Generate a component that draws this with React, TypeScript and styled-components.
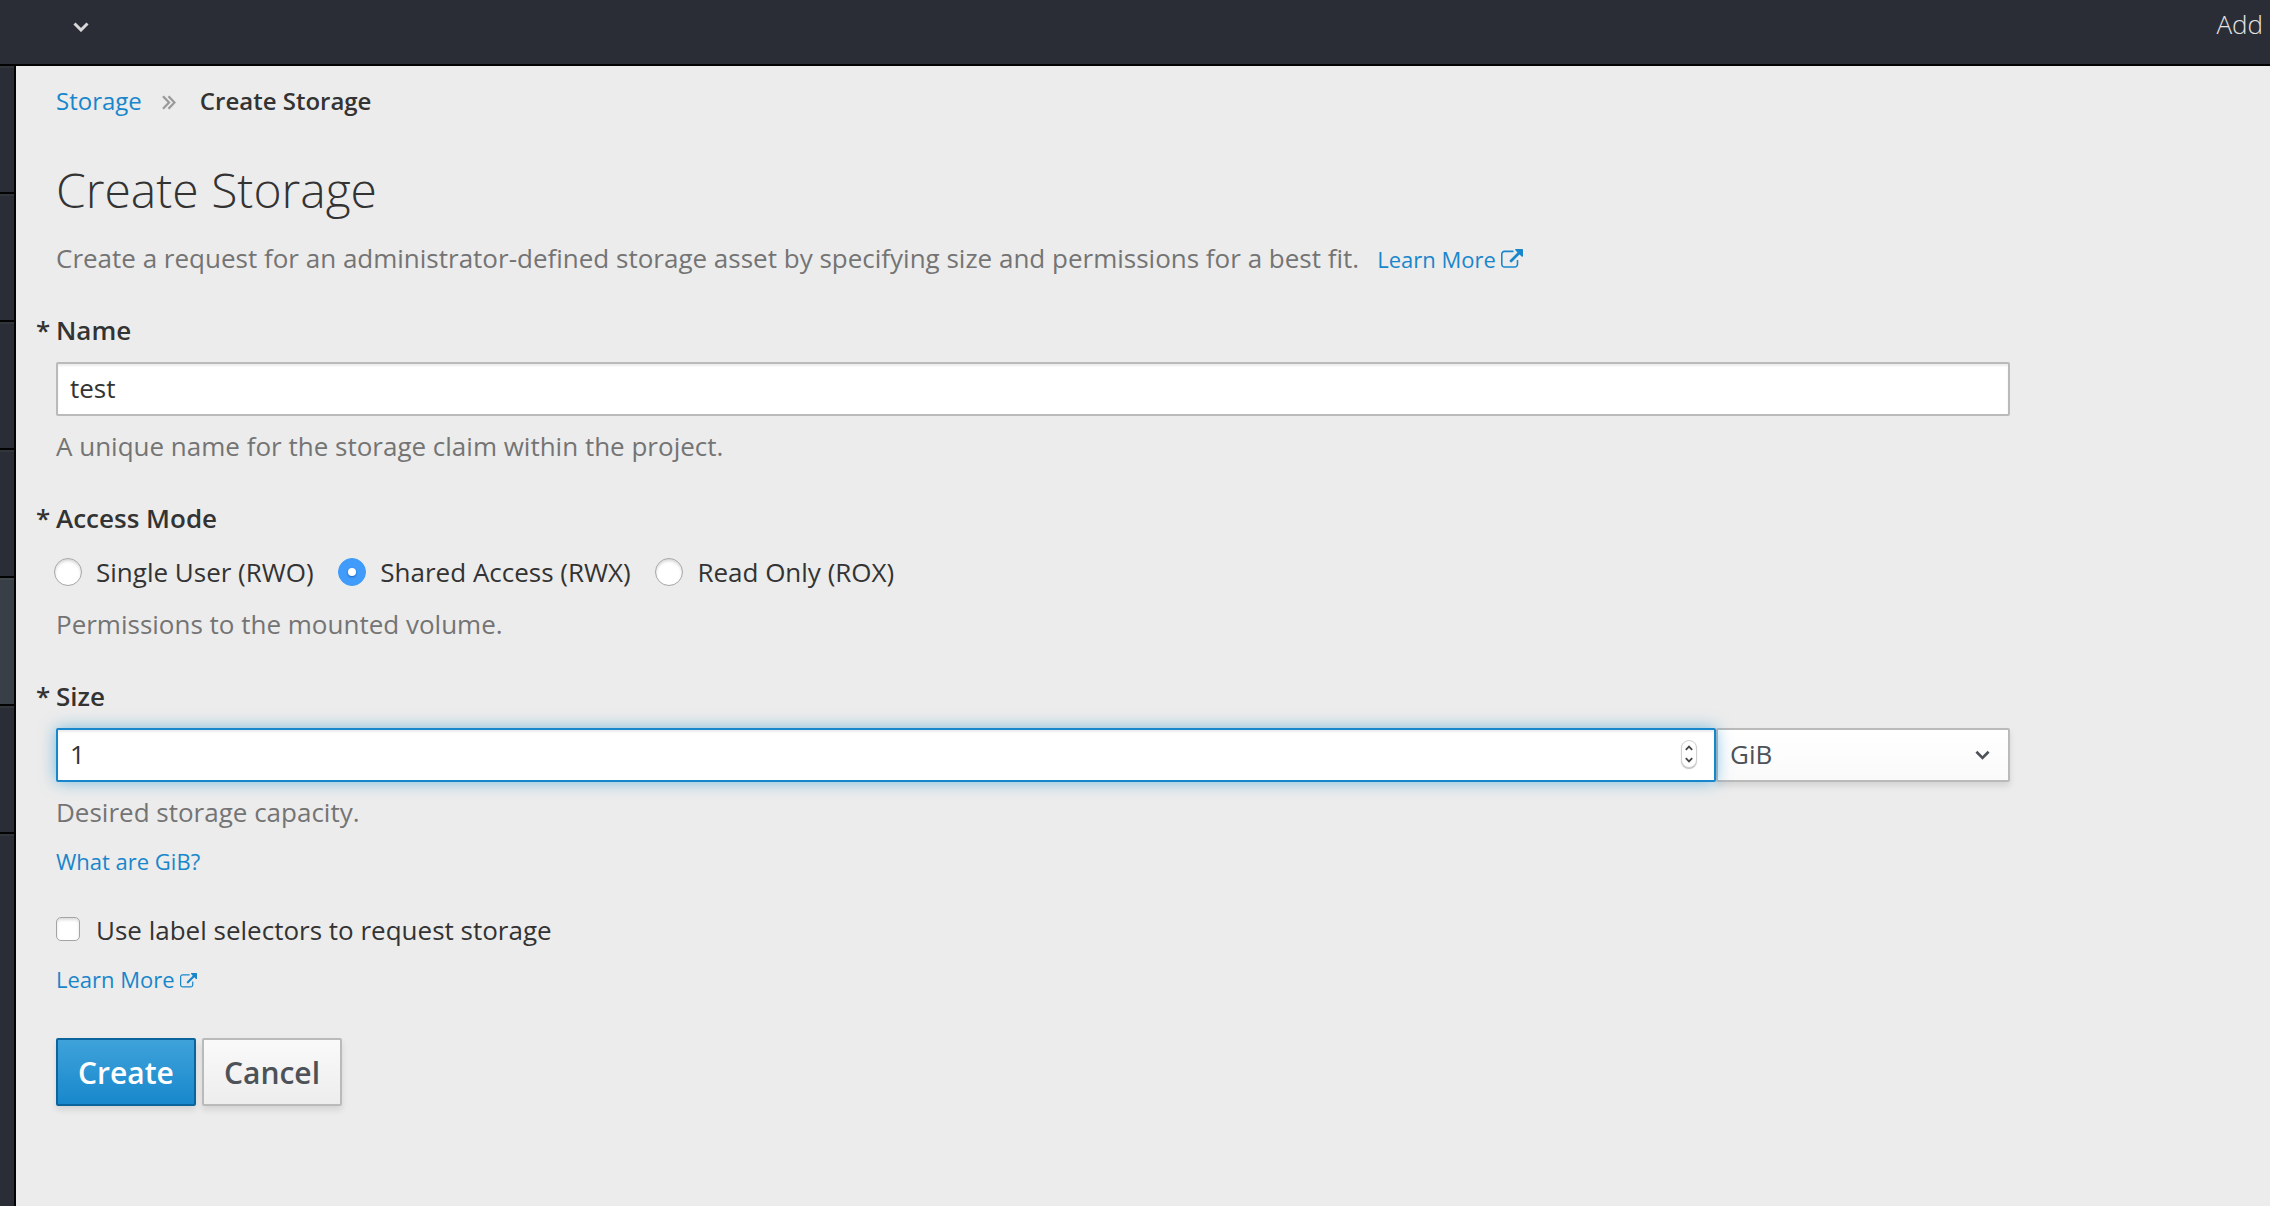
import React, { useState } from "react";
import styled, { createGlobalStyle, css } from "styled-components";

const c = {
  page: "#ececec",
  chrome: "#2a2d35",
  active: "#393f46",
  link: "#1886cb",
  text: "#333333",
  muted: "#747474",
  control: "#4d5258",
  border: "#bababa",
};

const GlobalStyle = createGlobalStyle`
  *, *::before, *::after { box-sizing: border-box; }
  html, body { margin: 0; height: 100%; overflow: hidden; }
  body { font-family: "Open Sans", "Noto Sans", sans-serif; font-size: 26px; line-height: 40px; color: ${c.text}; background: ${c.page}; }
  input, button { font: inherit; color: inherit; }
`;

const Shell = styled.div`
  display: flex;
  flex-direction: column;
  height: 100vh;
`;
const TopBar = styled.header`
  display: flex;
  justify-content: space-between;
  flex: none;
  height: 66px;
  padding: 4px 7px 0 73px;
  color: #d8d8d8;
  background: ${c.chrome};
  border-bottom: 2px solid #030303;
`;
const ProjectToggle = styled.div`
  padding-top: 18px;
  line-height: 0;
`;
const AddLink = styled.span`
  font-weight: 300;
  color: #e4e4e4;
`;
const Body = styled.div`
  display: flex;
  flex: 1;
  min-height: 0;
`;
const Rail = styled.nav`
  display: flex;
  flex-direction: column;
  flex: none;
  width: 16px;
  background: ${c.chrome};
  border-right: 2px solid #030303;
`;
const RailItem = styled.div<{ $active?: boolean }>`
  height: 128px;
  border-bottom: 2px solid #030303;
  box-shadow: inset 0 2px 0 ${(p) => (p.$active ? "#40474d" : "#33353c")};
  background: ${(p) => (p.$active ? c.active : c.chrome)};
`;
const RailRest = styled.div`
  flex: 1;
  box-shadow: inset 0 2px 0 #33353c;
`;
const Main = styled.main`
  flex: 1;
  padding: 15px 40px 0;
`;
const Breadcrumb = styled.div`
  display: flex;
  align-items: center;
  font-size: 24px;
`;
const CrumbLink = styled.a`
  color: ${c.link};
`;
const Divider = styled.span`
  display: flex;
  margin: 3px 24px 0 20px;
`;
const Current = styled.span`
  font-weight: 600;
`;
const Title = styled.h1`
  margin: 39px 0 18px;
  font-size: 48px;
  font-weight: 300;
  line-height: 60px;
`;
const Description = styled.div`
  display: flex;
  align-items: baseline;
  height: 40px;
  color: ${c.muted};
`;
const Link = styled.a<{ $gap?: number }>`
  display: inline-flex;
  align-items: baseline;
  gap: ${(p) => p.$gap ?? 0}px;
  font-size: 22px;
  color: ${c.link};
`;
const DescriptionLink = styled(Link)`
  margin-left: 18px;
`;
const Form = styled.div`
  width: 1954px;
`;
const Label = styled.div`
  display: flex;
  margin-top: 32px;
  font-weight: 600;
`;
const Required = styled.span`
  width: 20px;
  margin-left: -20px;
`;
const Help = styled.div<{ $top: number }>`
  margin-top: ${(p) => p.$top}px;
  color: ${c.muted};
`;
const InputRow = styled.div`
  display: flex;
  height: 54px;
  margin-top: 12px;
`;
const Field = styled.div<{ $focused?: boolean }>`
  display: flex;
  align-items: center;
  flex: 1;
  padding: 0 17px 0 12px;
  background: #fff;
  border: 2px solid ${c.border};
  border-radius: 2px;
  box-shadow: inset 0 2px 2px rgba(3, 3, 3, 0.075);
  ${(p) =>
    p.$focused &&
    css`
      z-index: 1;
      border-color: ${c.link};
      box-shadow: inset 0 2px 2px rgba(3, 3, 3, 0.075), 0 0 16px rgba(0, 136, 206, 0.5);
    `}
`;
const TextInput = styled.input`
  flex: 1;
  min-width: 0;
  height: 48px;
  padding: 0 0 2px;
  border: 0;
  outline: 0;
  background: transparent;
`;
const Spinner = styled.div`
  display: flex;
  align-items: center;
  justify-content: center;
  width: 16px;
  height: 28px;
  margin-bottom: 2px;
  background: #fff;
  border: 1px solid #d0d0d0;
  border-radius: 8px;
  box-shadow: 0 1px 1px rgba(0, 0, 0, 0.25);
`;
const UnitSelect = styled.div`
  display: flex;
  align-items: center;
  justify-content: space-between;
  width: 294px;
  padding: 0 18px 0 12px;
  color: ${c.control};
  background: linear-gradient(#fff, #fafafa);
  border: 2px solid ${c.border};
  border-radius: 2px;
  box-shadow: 0 4px 6px rgba(3, 3, 3, 0.1);
`;
const UnitText = styled.span`
  padding-bottom: 2px;
`;
const RadioRow = styled.div`
  display: flex;
  gap: 24.6px;
  margin: 14px 0 0 -2px;
`;
const Choice = styled.label<{ $gap: number }>`
  display: flex;
  align-items: center;
  gap: ${(p) => p.$gap}px;
`;
const Radio = styled.span<{ $checked?: boolean }>`
  display: flex;
  align-items: center;
  justify-content: center;
  width: 28px;
  height: 28px;
  border-radius: 50%;
  background: #fff;
  border: 1px solid #a6a6a6;
  box-shadow: inset 0 2px 3px rgba(0, 0, 0, 0.16);
  ${(p) =>
    p.$checked &&
    css`
      background: #409bfa;
      border-color: #409bfa;
      box-shadow: none;
      &::after {
        content: "";
        width: 8px;
        height: 8px;
        border-radius: 50%;
        background: #fff;
        box-shadow: 0 1px 2px rgba(0, 40, 120, 0.5);
      }
    `}
`;
const Checkbox = styled.span`
  width: 24px;
  height: 24px;
  margin-bottom: 2px;
  background: #fff;
  border: 1px solid #a4a4a4;
  border-radius: 5px;
  box-shadow: inset 0 2px 3px rgba(0, 0, 0, 0.14);
`;
const SmallLine = styled.div`
  display: flex;
  margin-top: 9px;
`;
const CheckLine = styled.div`
  display: flex;
  margin-top: 29px;
`;
const Actions = styled.div`
  display: flex;
  gap: 6px;
  margin-top: 39px;
`;
const Button = styled.button<{ $primary?: boolean }>`
  width: 140px;
  height: 68px;
  padding: 1px 0 0;
  font-size: 30px;
  font-weight: 600;
  line-height: 63px;
  border-radius: 2px;
  border: 2px solid ${(p) => (p.$primary ? "#0b649b" : c.border)};
  color: ${(p) => (p.$primary ? "#fff" : c.control)};
  background: ${(p) => (p.$primary ? "linear-gradient(#40a3da, #1787cc)" : "linear-gradient(#fafafa, #ededed)")};
  background-origin: border-box;
  box-shadow: 0 4px 6px rgba(3, 3, 3, 0.1);
`;

const Chevron = ({ size = 16, weight = 3 }: { size?: number; weight?: number }) => (
  <svg width={size} height={10} viewBox="0 0 16 10" fill="none" stroke="currentColor" strokeWidth={weight}>
    <path d="M1.5 1.5 8 8 14.5 1.5" />
  </svg>
);

const DoubleAngle = () => (
  <svg width="14" height="15" viewBox="0 0 14 15" fill="none" stroke="#9a9a9a" strokeWidth="2.300">
    <path d="M1 1.200 7 7.500 1 13.800M6.500 1.200l6 6.300-6 6.300" />
  </svg>
);

const External = ({ size }: { size: number }) => (
  <svg width={size} height={(size * 1536) / 1792} viewBox="0 0 1792 1536" fill="currentColor">
    <path d="M1408 928v320q0 119-84.500 203.500T1120 1536H288q-119 0-203.500-84.500T0 1248V416q0-119 84.500-203.500T288 128h704q14 0 23 9t9 23v64q0 14-9 23t-23 9H288q-66 0-113 47t-47 113v832q0 66 47 113t113 47h832q66 0 113-47t47-113V928q0-14 9-23t23-9h64q14 0 23 9t9 23zm384-864v512q0 26-19 45t-45 19-45-19l-176-176-652 652q-10 10-23 10t-23-10L695 983q-10-10-10-23t10-23l652-652-176-176q-19-19-19-45t19-45 45-19h512q26 0 45 19t19 45z" />
  </svg>
);

const Steppers = () => (
  <svg width="8" height="18" viewBox="0 0 8 18" fill="none" stroke="#444" strokeWidth="1.800">
    <path d="M.8 4.800 4 1.600l3.200 3.200M.8 13.200 4 16.400l3.200-3.200" />
  </svg>
);

const FieldLabel = ({ children }: { children: React.ReactNode }) => (
  <Label>
    <Required>*</Required>
    {children}
  </Label>
);

const modes = ["Single User (RWO)", "Shared Access (RWX)", "Read Only (ROX)"];

export default function App() {
  const [name, setName] = useState("test");
  const [size, setSize] = useState("1");
  const [mode, setMode] = useState(1);

  return (
    <Shell>
      <GlobalStyle />
      <TopBar>
        <ProjectToggle>
          <Chevron />
        </ProjectToggle>
        <AddLink>Add</AddLink>
      </TopBar>
      <Body>
        <Rail>
          {[0, 1, 2, 3, 4, 5].map((i) => (
            <RailItem key={i} $active={i === 4} />
          ))}
          <RailRest />
        </Rail>
        <Main>
          <Breadcrumb>
            <CrumbLink>Storage</CrumbLink>
            <Divider>
              <DoubleAngle />
            </Divider>
            <Current>Create Storage</Current>
          </Breadcrumb>
          <Title>Create Storage</Title>
          <Description>
            Create a request for an administrator-defined storage asset by specifying size and permissions for a best fit.
            <DescriptionLink $gap={5.500}>
              Learn More
              <External size={22} />
            </DescriptionLink>
          </Description>
          <Form>
            <FieldLabel>Name</FieldLabel>
            <InputRow>
              <Field>
                <TextInput value={name} onChange={(e) => setName(e.target.value)} />
              </Field>
            </InputRow>
            <Help $top={10}>A unique name for the storage claim within the project.</Help>

            <FieldLabel>Access Mode</FieldLabel>
            <RadioRow>
              {modes.map((m, i) => (
                <Choice key={m} $gap={14} onClick={() => setMode(i)}>
                  <Radio $checked={mode === i} />
                  {m}
                </Choice>
              ))}
            </RadioRow>
            <Help $top={12}>Permissions to the mounted volume.</Help>

            <FieldLabel>Size</FieldLabel>
            <InputRow>
              <Field $focused>
                <TextInput value={size} onChange={(e) => setSize(e.target.value)} />
                <Spinner>
                  <Steppers />
                </Spinner>
              </Field>
              <UnitSelect>
                <UnitText>GiB</UnitText>
                <Chevron size={15} weight={2.800} />
              </UnitSelect>
            </InputRow>
            <Help $top={10}>Desired storage capacity.</Help>
            <SmallLine>
              <Link>What are GiB?</Link>
            </SmallLine>

            <CheckLine>
              <Choice $gap={16}>
                <Checkbox />
                Use label selectors to request storage
              </Choice>
            </CheckLine>
            <SmallLine>
              <Link $gap={5.500}>
                Learn More
                <External size={17} />
              </Link>
            </SmallLine>

            <Actions>
              <Button $primary>Create</Button>
              <Button>Cancel</Button>
            </Actions>
          </Form>
        </Main>
      </Body>
    </Shell>
  );
}
